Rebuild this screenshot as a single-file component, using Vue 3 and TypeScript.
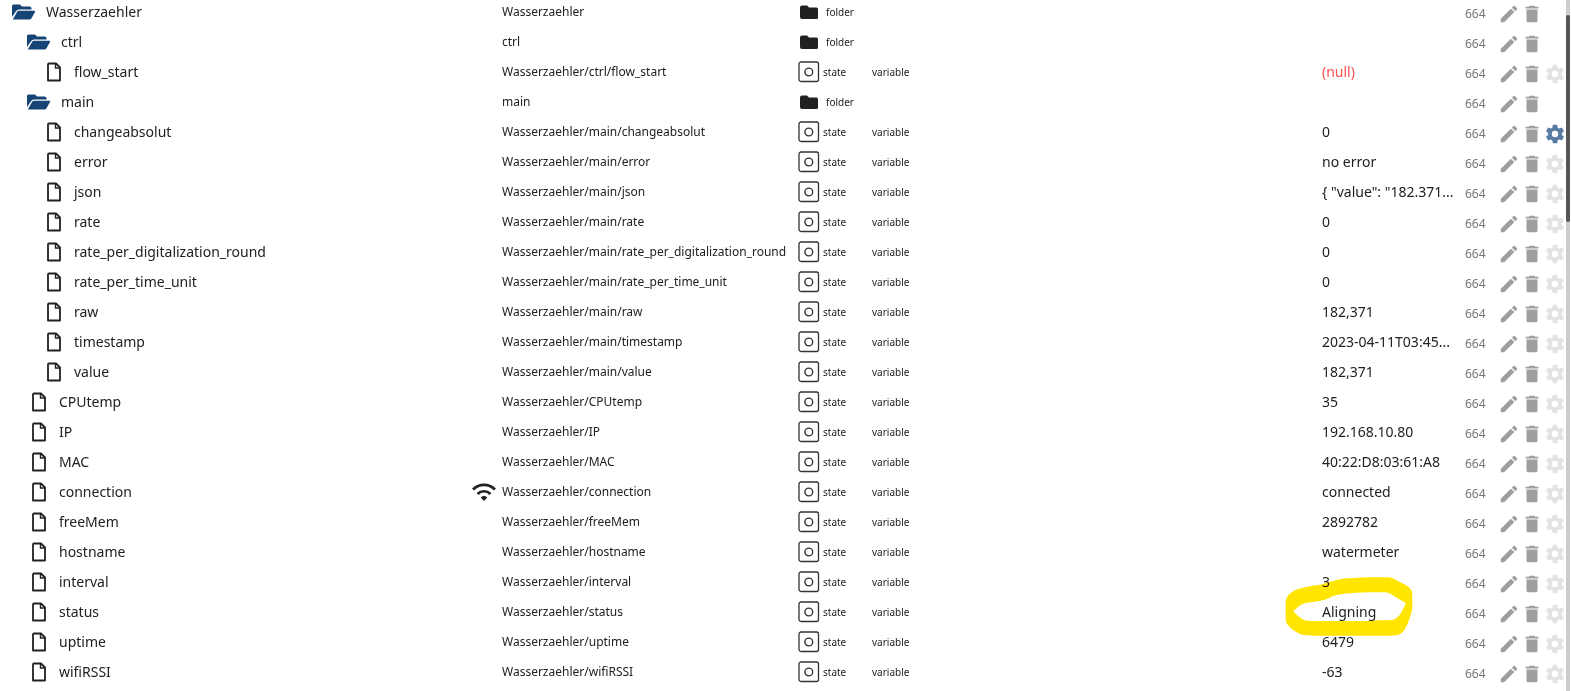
<script setup lang="ts">
interface ObjectRow {
  name: string
  level: number
  path: string
  folder?: boolean
  value?: string
  custom?: boolean
  online?: boolean
  marked?: boolean
}

const rows: ObjectRow[] = [
  { name: 'Wasserzaehler', level: 0, path: 'Wasserzaehler', folder: true },
  { name: 'ctrl', level: 1, path: 'ctrl', folder: true },
  { name: 'flow_start', level: 2, path: 'Wasserzaehler/ctrl/flow_start', value: '(null)' },
  { name: 'main', level: 1, path: 'main', folder: true },
  { name: 'changeabsolut', level: 2, path: 'Wasserzaehler/main/changeabsolut', value: '0', custom: true },
  { name: 'error', level: 2, path: 'Wasserzaehler/main/error', value: 'no error' },
  { name: 'json', level: 2, path: 'Wasserzaehler/main/json', value: '{ "value": "182.371...' },
  { name: 'rate', level: 2, path: 'Wasserzaehler/main/rate', value: '0' },
  { name: 'rate_per_digitalization_round', level: 2, path: 'Wasserzaehler/main/rate_per_digitalization_round', value: '0' },
  { name: 'rate_per_time_unit', level: 2, path: 'Wasserzaehler/main/rate_per_time_unit', value: '0' },
  { name: 'raw', level: 2, path: 'Wasserzaehler/main/raw', value: '182,371' },
  { name: 'timestamp', level: 2, path: 'Wasserzaehler/main/timestamp', value: '2023-04-11T03:45...' },
  { name: 'value', level: 2, path: 'Wasserzaehler/main/value', value: '182,371' },
  { name: 'CPUtemp', level: 1, path: 'Wasserzaehler/CPUtemp', value: '35' },
  { name: 'IP', level: 1, path: 'Wasserzaehler/IP', value: '192.168.10.80' },
  { name: 'MAC', level: 1, path: 'Wasserzaehler/MAC', value: '40:22:D8:03:61:A8' },
  { name: 'connection', level: 1, path: 'Wasserzaehler/connection', value: 'connected', online: true },
  { name: 'freeMem', level: 1, path: 'Wasserzaehler/freeMem', value: '2892782' },
  { name: 'hostname', level: 1, path: 'Wasserzaehler/hostname', value: 'watermeter' },
  { name: 'interval', level: 1, path: 'Wasserzaehler/interval', value: '3' },
  { name: 'status', level: 1, path: 'Wasserzaehler/status', value: 'Aligning', marked: true },
  { name: 'uptime', level: 1, path: 'Wasserzaehler/uptime', value: '6479' },
  { name: 'wifiRSSI', level: 1, path: 'Wasserzaehler/wifiRSSI', value: '-63' },
]
</script>

<template>
  <main class="browser">
    <div class="viewport">
      <table class="objects">
        <colgroup>
          <col class="c-name" />
          <col class="c-icon" />
          <col class="c-path" />
          <col class="c-type" />
          <col class="c-role" />
          <col class="c-value" />
          <col class="c-acl" />
          <col class="c-actions" />
        </colgroup>
        <tbody>
          <tr v-for="row in rows" :key="row.level + row.path">
            <td>
              <div class="name" :class="['level-' + row.level, { folder: row.folder }]">
                <svg v-if="row.folder" class="tree-icon" viewBox="0 0 24 16" aria-hidden="true">
                  <path fill="#164477" d="M0 13V2Q0 0.500 1.500 0.500H7.500Q8.300 0.500 8.800 1.200L10 2.500H17.500Q19.500 2.500 19.500 4.500V5.500H7Q5 5.500 4.200 7Z" />
                  <path fill="#164477" d="M0.800 15.500L5 8Q5.700 6.700 7 6.700H22.300Q23.700 6.700 23 8L19.500 14.300Q18.800 15.500 17.500 15.500Z" />
                </svg>
                <svg v-else class="tree-icon file" viewBox="0 0 24 20" aria-hidden="true">
                  <path fill="none" stroke="#212121" stroke-width="1.800" stroke-linejoin="round" d="M7 1.500H14L18 5.500V18.500H6V2.500Q6 1.500 7 1.500Z" />
                  <path fill="none" stroke="#212121" stroke-width="1.400" d="M13.500 1.500V6H18" />
                </svg>
                <span>{{ row.name }}</span>
              </div>
            </td>
            <td>
              <svg v-if="row.online" class="wifi" viewBox="0 0 24 24" role="img" aria-label="online">
                <g fill="none" stroke="#212121" stroke-width="2.600">
                  <path d="M1 9.500C7.200 3.300 16.800 3.300 23 9.500" />
                  <path d="M5.500 14C9.200 10.300 14.800 10.300 18.500 14" />
                </g>
                <path fill="#212121" d="M8.700 17.500Q12 14.700 15.300 17.500L12 21Z" />
              </svg>
            </td>
            <td class="path">{{ row.path }}</td>
            <td>
              <div class="type" :class="{ folder: row.folder }">
                <svg v-if="row.folder" class="type-icon" viewBox="0 0 22 22" aria-hidden="true">
                  <path fill="#212121" d="M4 4.500H9L11 6.500H18.500Q20 6.500 20 8V16.500Q20 18 18.500 18H4Q2 18 2 16V6.500Q2 4.500 4 4.500Z" />
                </svg>
                <svg v-else class="type-icon" viewBox="0 0 22 22" aria-hidden="true">
                  <rect x="1" y="1" width="19.500" height="19.500" rx="2" fill="none" stroke="#333" stroke-width="1.300" />
                  <circle cx="10.800" cy="11" r="3.900" fill="none" stroke="#333" stroke-width="1.400" />
                </svg>
                <span>{{ row.folder ? 'folder' : 'state' }}</span>
              </div>
            </td>
            <td class="role">{{ row.folder ? '' : 'variable' }}</td>
            <td class="value" :class="{ empty: row.value === '(null)' }">
              {{ row.value }}
              <svg v-if="row.marked" class="marker" viewBox="45 48 384 180" aria-hidden="true">
                <path
                  fill="#ffe500"
                  fill-rule="evenodd"
                  d="M47 130C47 108 62 96 82 88C100 81 120 79 150 74C180 67 200 58 230 55C270 51 320 51 355 52C366 53 375 58 385 64C405 74 427 83 427 102V140C426 158 421 170 416 182C409 203 402 216 386 224C375 228 350 226 320 227H130C110 227 98 226 86 220C70 211 54 200 48 186C46 170 47 150 47 130ZM70 154C82 141 94 131 110 128C130 126 160 123 178 114C195 104 210 103 240 100C280 96 315 97 345 97C357 98 365 104 376 111L402 126C406 128 408 130 406 134L393 158C387 168 379 178 364 180C340 182 310 180 290 183H125C112 184 101 181 92 174Q80 166 70 154Z"
                />
              </svg>
            </td>
            <td class="acl">664</td>
            <td>
              <div class="actions">
                <button type="button" aria-label="Edit">
                  <svg viewBox="0 0 24 24"><path d="M3 17.250V21h3.750L17.810 9.940l-3.750-3.750L3 17.250zM20.710 7.040c.39-.39.39-1.020 0-1.410l-2.340-2.340c-.39-.39-1.020-.39-1.410 0l-1.830 1.830 3.750 3.750 1.830-1.830z" /></svg>
                </button>
                <button type="button" aria-label="Delete">
                  <svg viewBox="0 0 24 24"><path d="M6 19c0 1.100.9 2 2 2h8c1.100 0 2-.9 2-2V7H6v12zM19 4h-3.500l-1-1h-5l-1 1H5v2h14V4z" /></svg>
                </button>
                <button v-if="!row.folder" type="button" aria-label="Custom settings" class="gear" :class="{ active: row.custom }">
                  <svg viewBox="0 0 24 24"><path d="M12 15.500A3.500 3.500 0 0 1 8.500 12 3.500 3.500 0 0 1 12 8.500a3.500 3.500 0 0 1 3.500 3.500 3.500 3.500 0 0 1-3.500 3.500m7.430-2.530c.04-.32.07-.64.07-.97s-.03-.66-.07-1l2.110-1.630c.19-.15.24-.42.12-.64l-2-3.460c-.12-.22-.39-.31-.61-.22l-2.490 1c-.52-.39-1.060-.73-1.690-.98l-.37-2.650A.506.506 0 0 0 14 2h-4c-.25 0-.46.18-.5.42l-.37 2.650c-.63.25-1.170.59-1.690.98l-2.490-1c-.22-.09-.49 0-.61.22l-2 3.460c-.13.22-.07.49.12.64L4.570 11c-.04.34-.07.67-.07 1s.03.65.07.97l-2.110 1.660c-.19.15-.25.42-.12.64l2 3.460c.12.22.39.3.61.22l2.490-1.010c.52.4 1.060.74 1.690.99l.37 2.650c.04.24.25.42.5.42h4c.25 0 .46-.18.5-.42l.37-2.650c.63-.26 1.170-.59 1.690-.99l2.490 1.010c.22.08.49 0 .61-.22l2-3.460c.12-.22.07-.49-.12-.64z" /></svg>
                </button>
              </div>
            </td>
          </tr>
        </tbody>
      </table>
    </div>
    <div class="scroll-track" aria-hidden="true"><div class="scroll-thumb"></div></div>
  </main>
</template>

<style>
body {
  margin: 0;
  overflow: hidden;
  background: #fff;
}
</style>

<style scoped>
.browser {
  display: flex;
  height: 100vh;
  overflow: hidden;
  padding-right: 1px;
  box-sizing: border-box;
  color: #212121;
  font-family: "Noto Sans", "Open Sans", sans-serif;
}
.viewport {
  flex: 1;
  min-width: 0;
  overflow: hidden;
}
.objects {
  width: 100%;
  margin-top: -3px;
  table-layout: fixed;
  border-collapse: collapse;
}
.c-name { width: 472px; }
.c-icon { width: 30px; }
.c-path { width: 296px; }
.c-type { width: 74px; }
.c-value { width: 143px; }
.c-acl { width: 33px; }
.c-actions { width: 68px; }
td {
  height: 30px;
  box-sizing: border-box;
  padding: 0;
  line-height: 24px;
  white-space: nowrap;
  vertical-align: middle;
}
svg {
  display: block;
  flex: none;
}
.name {
  display: flex;
  align-items: center;
  gap: 8px;
  font-size: 14px;
}
.name.folder { gap: 10px; }
.level-0 { padding-left: 12px; }
.level-1 { padding-left: 27px; }
.level-2 { padding-left: 42px; }
.tree-icon {
  width: 24px;
  height: 16px;
}
.tree-icon.file { height: 20px; }
.wifi {
  width: 24px;
  height: 24px;
}
.path { font-size: 12px; }
.type {
  display: flex;
  align-items: center;
  gap: 3px;
  font-size: 10px;
}
.type.folder { gap: 6px; }
.type-icon {
  width: 22px;
  height: 22px;
}
.role { font-size: 10px; }
.value {
  position: relative;
  font-size: 14px;
}
.value.empty { color: #ff4f4f; }
.marker {
  position: absolute;
  top: -21px;
  left: -37px;
  width: 128px;
  height: 60px;
  mix-blend-mode: multiply;
  pointer-events: none;
}
.acl {
  padding-top: 3px;
  color: #777;
  font-size: 12px;
}
.actions {
  display: flex;
  gap: 1px;
  padding-top: 3px;
}
button {
  width: 22px;
  height: 22px;
  padding: 0;
  border: 0;
  background: none;
  color: #9e9e9e;
  cursor: pointer;
}
button svg {
  width: 22px;
  height: 22px;
  fill: currentColor;
}
.gear { color: #e3e3e3; }
.gear.active { color: #577ba3; }
.scroll-track {
  width: 4px;
  padding-top: 15px;
  background: #ccc;
}
.scroll-thumb {
  height: 30vh;
  border-radius: 2px;
  background: #555;
}
</style>
